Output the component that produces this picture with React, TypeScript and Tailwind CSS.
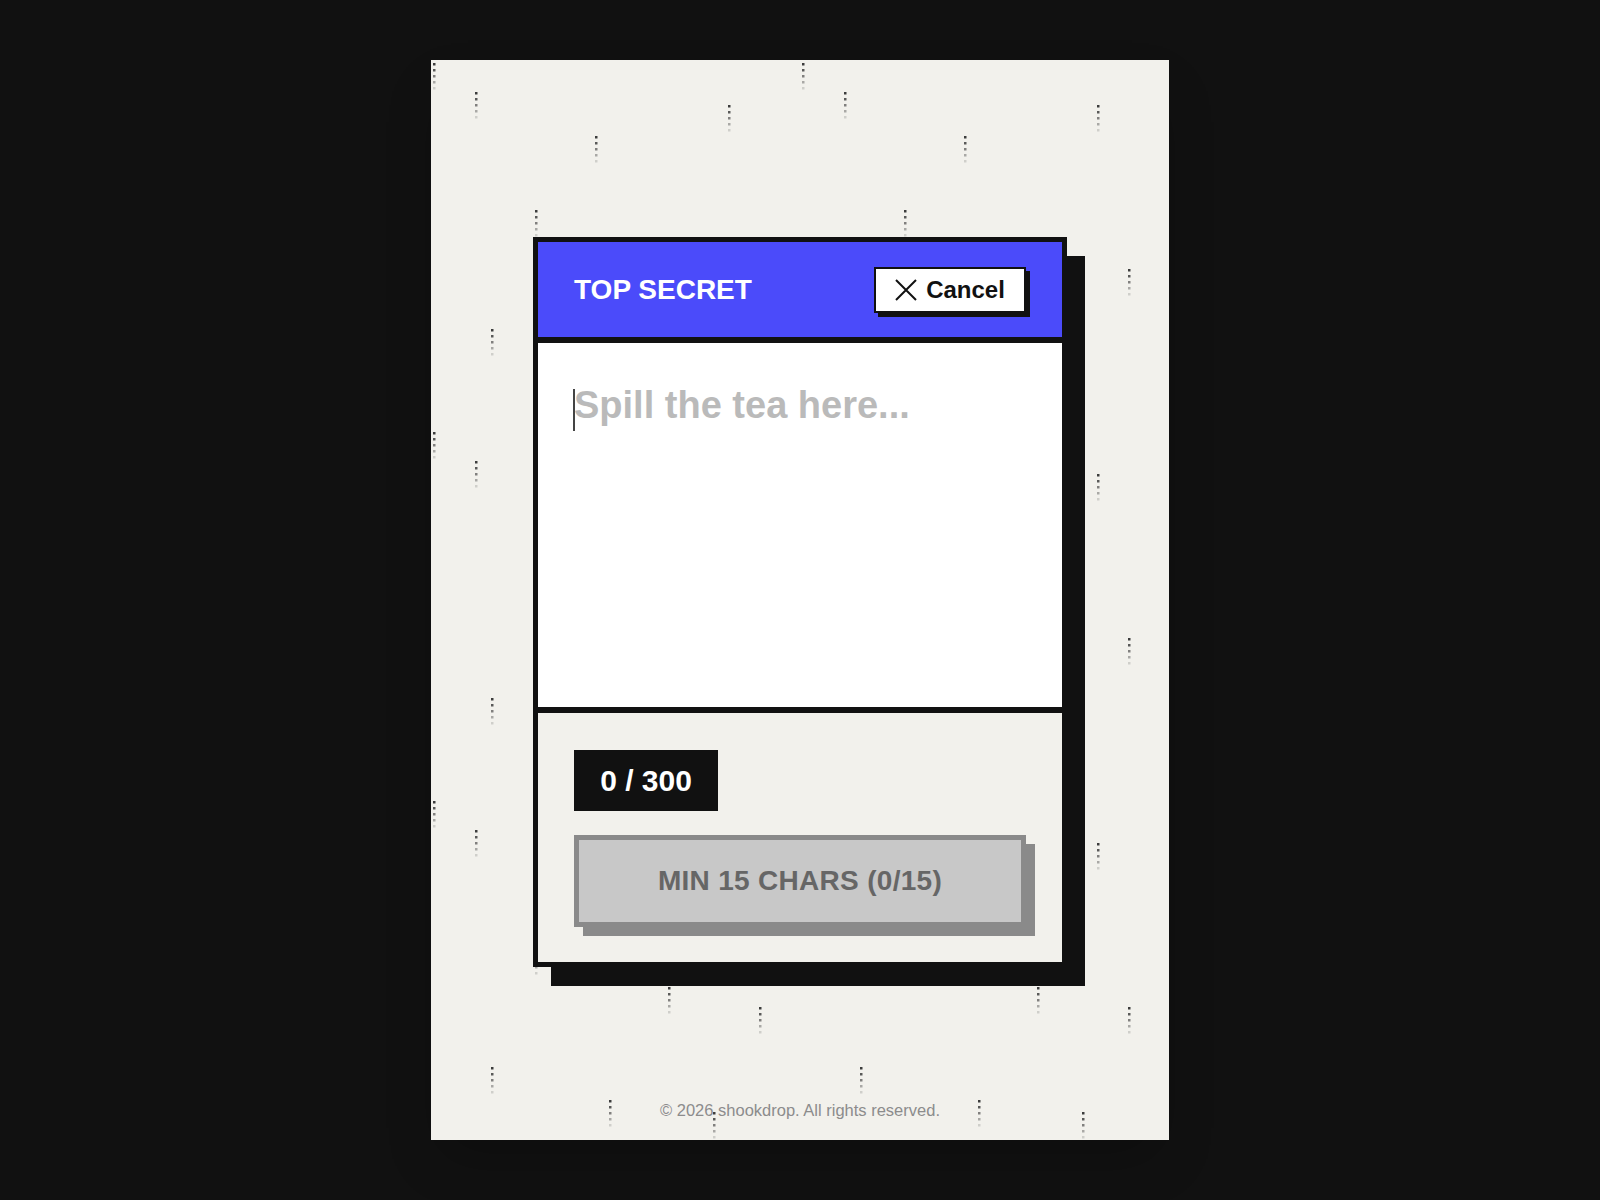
import React from 'react';

// rain streak tops inside one 369px tile (x, y)
const STREAKS: [number, number][] = [
  [2, 3],
  [44, 32],
  [164, 76],
  [297, 45],
  [104, 150],
  [328, 209],
  [60, 269],
  [178, 302],
  [237, 189],
  [282, 314],
];

const DOT_OPACITY = [0.95, 0.8, 0.6, 0.38, 0.18];

function Rain() {
  return (
    <svg className="absolute inset-0 h-full w-full" aria-hidden="true">
      <defs>
        <pattern id="rain" width="369" height="369" patternUnits="userSpaceOnUse">
          {STREAKS.map(([x, y]) =>
            DOT_OPACITY.map((o, i) => (
              <rect
                key={`${x}-${y}-${i}`}
                x={x}
                y={y + i * 6}
                width="2.5"
                height="2.5"
                fill="#333"
                fillOpacity={o}
              />
            ))
          )}
        </pattern>
      </defs>
      <rect width="100%" height="100%" fill="url(#rain)" />
    </svg>
  );
}

function CloseIcon() {
  return (
    <svg width="22" height="22" viewBox="0 0 22 22" fill="none" stroke="#111" strokeWidth="2">
      <path d="M1 1 21 21M21 1 1 21" />
    </svg>
  );
}

export default function App() {
  return (
    <div className="flex h-screen w-full items-center justify-center bg-[#111] font-['Liberation_Sans',Arial,sans-serif]">
      <div className="relative flex h-[1080px] w-[738px] items-center justify-center overflow-hidden bg-[#f2f1ec] pt-1 shadow-2xl">
        <Rain />

        <div className="relative z-10 flex w-[534px] flex-col border-[5px] border-[#111] bg-white shadow-[18px_19px_0_#111]">
          <div className="flex h-[101px] items-center justify-between border-b-[6px] border-[#111] bg-[#4b4bfa] px-9">
            <h1 className="text-[28px] font-bold text-white">TOP SECRET</h1>
            <button className="flex h-[46px] w-[152px] items-center justify-center gap-[9px] border-2 border-[#111] bg-white text-[24px] font-bold text-[#111] shadow-[4px_4px_0_#111]">
              <CloseIcon />
              Cancel
            </button>
          </div>

          <div className="relative h-[364px]">
            <textarea
              className="h-full w-full resize-none bg-white px-9 pt-[40px] font-['Liberation_Sans',Arial,sans-serif] text-[38px] font-bold leading-[1.2] text-[#111] outline-none placeholder:text-[#bababa]"
              placeholder="Spill the tea here..."
            />
            <span className="pointer-events-none absolute left-[35px] top-[46px] h-[42px] w-[2px] bg-[#444]" />
          </div>

          <div className="flex h-[255px] flex-col gap-[24px] border-t-[6px] border-[#111] bg-[#f2f1ec] px-9 pt-[37px]">
            <div className="flex h-[61px] w-[144px] items-center justify-center bg-[#111] text-[30px] font-bold text-white">
              0 / 300
            </div>
            <button
              disabled
              className="h-[92px] w-full border-[5px] border-[#8a8a8a] bg-[#c8c8c8] text-[28px] font-bold tracking-[0.3px] text-[#666] shadow-[9px_9px_0_#8a8a8a]"
            >
              MIN 15 CHARS (0/15)
            </button>
          </div>
        </div>

        <p className="absolute bottom-5 left-0 right-0 z-20 text-center text-[16.5px] leading-5 text-[#8c8c8c]">
          © 2026 shookdrop. All rights reserved.
        </p>
      </div>
    </div>
  );
}
